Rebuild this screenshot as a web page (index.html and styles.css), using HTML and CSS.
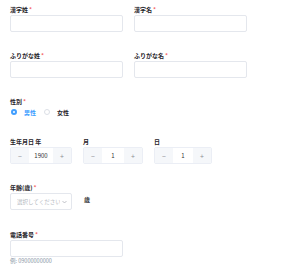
FILE: index.html
```html
<!DOCTYPE html>
<html lang="ja">
  <head>
    <meta charset="UTF-8" />
    <meta name="viewport" content="width=device-width, initial-scale=1.0" />
    <title>会員登録</title>
    <link rel="stylesheet" href="styles.css">
  </head>
  <body>
    <form class="form">
      <div class="row grid2">
        <div class="field">
          <label class="label">漢字姓<span class="req">*</span></label>
          <input class="input" type="text" />
        </div>
        <div class="field">
          <label class="label">漢字名<span class="req">*</span></label>
          <input class="input" type="text" />
        </div>
      </div>

      <div class="row grid2">
        <div class="field">
          <label class="label">ふりがな姓<span class="req">*</span></label>
          <input class="input" type="text" />
        </div>
        <div class="field">
          <label class="label">ふりがな名<span class="req">*</span></label>
          <input class="input" type="text" />
        </div>
      </div>

      <div class="row row-gender">
        <label class="label label-radio">性別<span class="req">*</span></label>
        <div class="radios">
          <span class="radio checked"><span class="dot"></span>男性</span>
          <span class="radio"><span class="dot"></span>女性</span>
        </div>
      </div>

      <div class="row grid3">
        <div class="field">
          <label class="label">生年月日 年</label>
          <div class="number">
            <span class="num-btn">−</span>
            <span class="num-val">1900</span>
            <span class="num-btn">+</span>
          </div>
        </div>
        <div class="field">
          <label class="label">月</label>
          <div class="number">
            <span class="num-btn">−</span>
            <span class="num-val">1</span>
            <span class="num-btn">+</span>
          </div>
        </div>
        <div class="field">
          <label class="label">日</label>
          <div class="number">
            <span class="num-btn">−</span>
            <span class="num-val">1</span>
            <span class="num-btn">+</span>
          </div>
        </div>
      </div>

      <div class="row row-age">
        <label class="label">年齢(歳)<span class="req">*</span></label>
        <div class="age-line">
          <div class="select">
            <span class="placeholder">選択してください</span>
            <svg class="chevron" width="5" height="4" viewBox="0 0 10 6">
              <path d="M1 1l4 4 4-4" fill="none" stroke="#a8abb2" stroke-width="1.4" />
            </svg>
          </div>
          <span class="unit">歳</span>
        </div>
      </div>

      <div class="row row-phone">
        <label class="label">電話番号<span class="req">*</span></label>
        <input class="input" type="tel" />
        <div class="hint">例: 09000000000</div>
      </div>
    </form>
  </body>
</html>
```

FILE: styles.css
```css
body {
  margin: 0;
  background: #ffffff;
  font-family: "Noto Sans CJK JP", "Noto Sans", sans-serif;
  color: #303133;
}
.form {
  padding: 6px 0 0 10px;
}
.row {
  margin-bottom: 20px;
}
.grid2 {
  display: grid;
  grid-template-columns: 113px 113px;
  gap: 11px;
}
.grid3 {
  display: grid;
  grid-template-columns: 62px 60px 58px;
  gap: 11px;
}
.label {
  display: block;
  font-size: 6px;
  line-height: 7px;
  font-weight: 700;
  color: #1f2329;
  margin-bottom: 2px;
  white-space: nowrap;
}
.req {
  color: #f56c6c;
  margin-left: 1px;
}
.input {
  display: block;
  box-sizing: border-box;
  width: 113px;
  height: 17px;
  margin: 0;
  padding: 0 4px;
  border: 1px solid #e4e7ed;
  border-radius: 2px;
  background: #fff;
  outline: none;
}

/* 性別 */
.row-gender {
  margin-bottom: 22px;
}
.label-radio {
  margin-bottom: 3px;
}
.radios {
  display: flex;
  gap: 7px;
  height: 8px;
  align-items: center;
}
.radio {
  display: flex;
  align-items: center;
  gap: 7px;
  font-size: 6px;
  font-weight: 700;
  color: #1f2329;
  margin-left: 1px;
}
.radio .dot {
  box-sizing: border-box;
  width: 6px;
  height: 6px;
  border-radius: 50%;
  border: 1px solid #dcdfe6;
  background: #fff;
}
.radio.checked {
  color: #409eff;
}
.radio.checked .dot {
  border: 2px solid #409eff;
}

/* 数字入力 */
.number {
  display: flex;
  box-sizing: border-box;
  height: 17px;
  border: 1px solid #ebeef5;
  border-radius: 2px;
  overflow: hidden;
}
.num-btn {
  width: 18px;
  flex: none;
  background: #f5f7fa;
  color: #8d9095;
  font-size: 7px;
  display: flex;
  align-items: center;
  justify-content: center;
}
.num-val {
  flex: 1;
  display: flex;
  align-items: center;
  justify-content: center;
  font-size: 6px;
  color: #303133;
}

/* 年齢 */
.age-line {
  display: flex;
  align-items: flex-start;
  gap: 12px;
}
.select {
  box-sizing: border-box;
  width: 62px;
  height: 17px;
  border: 1px solid #e4e7ed;
  border-radius: 2px;
  display: flex;
  align-items: center;
  padding: 0 4px 0 6px;
  gap: 2px;
  overflow: hidden;
}
.placeholder {
  flex: 1;
  font-size: 5.5px;
  color: #b4b8c0;
  white-space: nowrap;
  overflow: hidden;
}
.chevron {
  flex: none;
}
.unit {
  font-size: 6px;
  font-weight: 700;
  margin-top: 2px;
}
.row-age {
  margin-bottom: 21px;
}

/* 電話番号 */
.hint {
  font-size: 5.5px;
  line-height: 7px;
  color: #8c98a8;
  margin-top: 1px;
}
```
